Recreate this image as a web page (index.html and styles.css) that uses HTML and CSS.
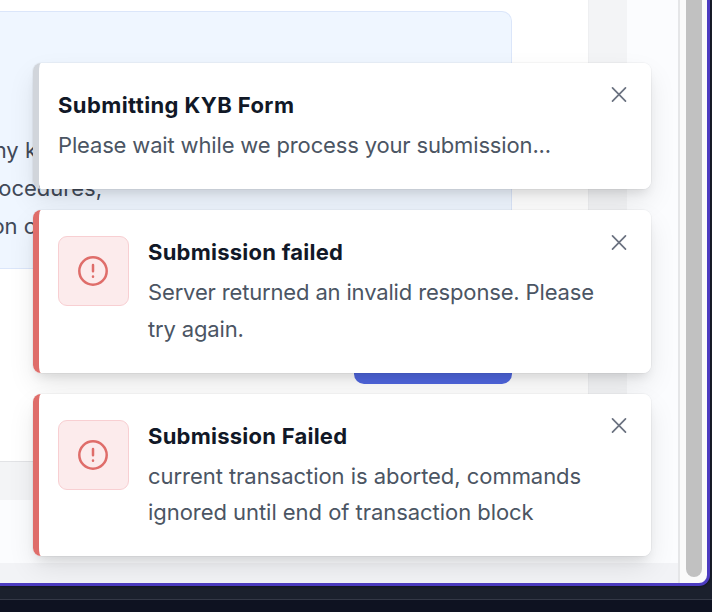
FILE: index.html
```html
<!DOCTYPE html>
<html lang="en">
<head>
<meta charset="utf-8">
<title>KYB Form</title>
<link rel="stylesheet" href="styles.css">
</head>
<body>
<div class="window">
  <main class="page">
    <div class="surface">
      <section class="panel">
        <div class="notice">
          <p class="line line-a">ny k</p>
          <p class="line line-b">ocedures,</p>
          <p class="line line-c">on o</p>
        </div>
        <div class="submit"></div>
      </section>
    </div>
    <div class="footer"></div>
  </main>
  <div class="scroll"><div class="thumb"></div></div>
</div>
<div class="taskbar"></div>
<div class="toasts">
  <article class="toast toast-info">
    <div class="body">
      <h2>Submitting KYB Form</h2>
      <p>Please wait while we process your submission...</p>
    </div>
    <svg class="close" viewBox="0 0 16 16"><path d="M1.5 .8 14.5 14.2M14.5 .8 1.5 14.2"/></svg>
  </article>
  <article class="toast toast-error">
    <div class="badge"><svg viewBox="0 0 30 30"><circle cx="15" cy="15" r="13.7"/><path d="M15 9v6.3M15 20.6v.1"/></svg></div>
    <div class="body">
      <h2>Submission failed</h2>
      <p>Server returned an invalid response. Please<br>try again.</p>
    </div>
    <svg class="close" viewBox="0 0 16 16"><path d="M1.5 1.8 14.5 15.2M14.5 1.8 1.5 15.2"/></svg>
  </article>
  <article class="toast toast-error toast-last">
    <div class="badge"><svg viewBox="0 0 30 30"><circle cx="15" cy="15" r="13.7"/><path d="M15 9v6.3M15 20.6v.1"/></svg></div>
    <div class="body">
      <h2>Submission Failed</h2>
      <p>current transaction is aborted, commands<br>ignored until end of transaction block</p>
    </div>
    <svg class="close" viewBox="0 0 16 16"><path d="M1.5 .8 14.5 14.2M14.5 .8 1.5 14.2"/></svg>
  </article>
</div>
</body>
</html>
```
FILE: styles.css
```css
* { box-sizing: border-box; }
body {
  margin: 0;
  width: 712px;
  height: 612px;
  overflow: hidden;
  position: relative;
  background: #1b202d;
  font-family: Inter, "Liberation Sans", sans-serif;
}
h2, p { margin: 0; }
.window {
  display: flex;
  width: 710px;
  height: 586px;
  border-right: 3px solid #4c3bc0;
  border-bottom: 3px solid #4c3bc0;
  border-bottom-right-radius: 11px;
  background: #fafafa;
  overflow: hidden;
  box-shadow: 0 0 3px #0b0e18;
}
.page {
  width: 680px;
  height: 583px;
  border-right: 2px solid #e5e6e8;
  background: #fbfcfe;
}
.surface {
  width: 627px;
  height: 500px;
  background: #f3f4f6;
}
.panel {
  width: 589px;
  height: 462px;
  padding-top: 11px;
  background: #fff;
  border-right: 1px solid #eeeff1;
  border-bottom: 1px solid #e2e3e6;
}
.notice {
  width: 512px;
  height: 258px;
  padding-top: 119px;
  overflow: hidden;
  border: 1px solid #dbe6fa;
  border-left: 0;
  border-top-right-radius: 10px;
  border-bottom-right-radius: 10px;
  background: #eff6ff;
}
.line {
  display: flex;
  justify-content: flex-end;
  white-space: nowrap;
  font-size: 22px;
  line-height: 38px;
  color: #414958;
}
.line-a { width: 37px; }
.line-b { width: 102px; }
.line-c { width: 37px; }
.submit {
  width: 158px;
  height: 60px;
  margin: 55px 0 0 354px;
  border-radius: 10px;
  background: #4f66df;
}
.footer {
  height: 20px;
  margin-top: 63px;
  background: #f2f3f6;
}
.scroll { padding-left: 6px; }
.thumb {
  width: 16px;
  height: 577px;
  border-radius: 0 0 8px 8px;
  background: #c1c1c1;
}
.taskbar {
  height: 13px;
  margin-top: 13px;
  border-top: 1px solid #343846;
  background: #0e1221;
}
.toasts {
  position: absolute;
  left: 33px;
  top: 63px;
  width: 618px;
  display: flex;
  flex-direction: column;
  gap: 21px;
}
.toast {
  display: flex;
  gap: 19px;
  height: 163px;
  padding: 26px 18px 0 19px;
  border-left: 6px solid #df6d6a;
  border-radius: 8px;
  background: linear-gradient(#fff, #fff) padding-box;
  box-shadow: 0 0 0 1px rgba(0, 0, 0, .03), 0 12px 28px -2px rgba(0, 0, 0, .1), 0 7px 11px -4px rgba(0, 0, 0, .1);
  position: relative;
}
.toast-info {
  height: 126px;
  border-left-color: #d1d5db;
}
.toast-last { height: 162px; }
.body { flex: 1; white-space: nowrap; }
.body h2 {
  font-size: 22px;
  line-height: 33px;
  font-weight: 700;
  letter-spacing: .24px;
  color: #111827;
}
.toast-info .body h2 { letter-spacing: .4px; }
.body p {
  margin-top: 5px;
  font-size: 22px;
  line-height: 36.5px;
  letter-spacing: -.155px;
  color: #4b5563;
}
.toast-last .body p {
  line-height: 36px;
  letter-spacing: -.045px;
}
.badge {
  display: flex;
  align-items: center;
  justify-content: center;
  width: 71px;
  height: 70px;
  padding-right: 1px;
  border: 1px solid #f8cfd2;
  border-radius: 9px;
  background: #fcebec;
}
.badge svg {
  width: 30px;
  height: 30px;
  fill: none;
  stroke: #df6d6a;
  stroke-width: 2.5;
  stroke-linecap: round;
}
.close {
  position: absolute;
  right: 24px;
  top: 24px;
  width: 16px;
  height: 16px;
  fill: none;
  stroke: #6b7280;
  stroke-width: 1.7;
  stroke-linecap: round;
  overflow: visible;
}
```
